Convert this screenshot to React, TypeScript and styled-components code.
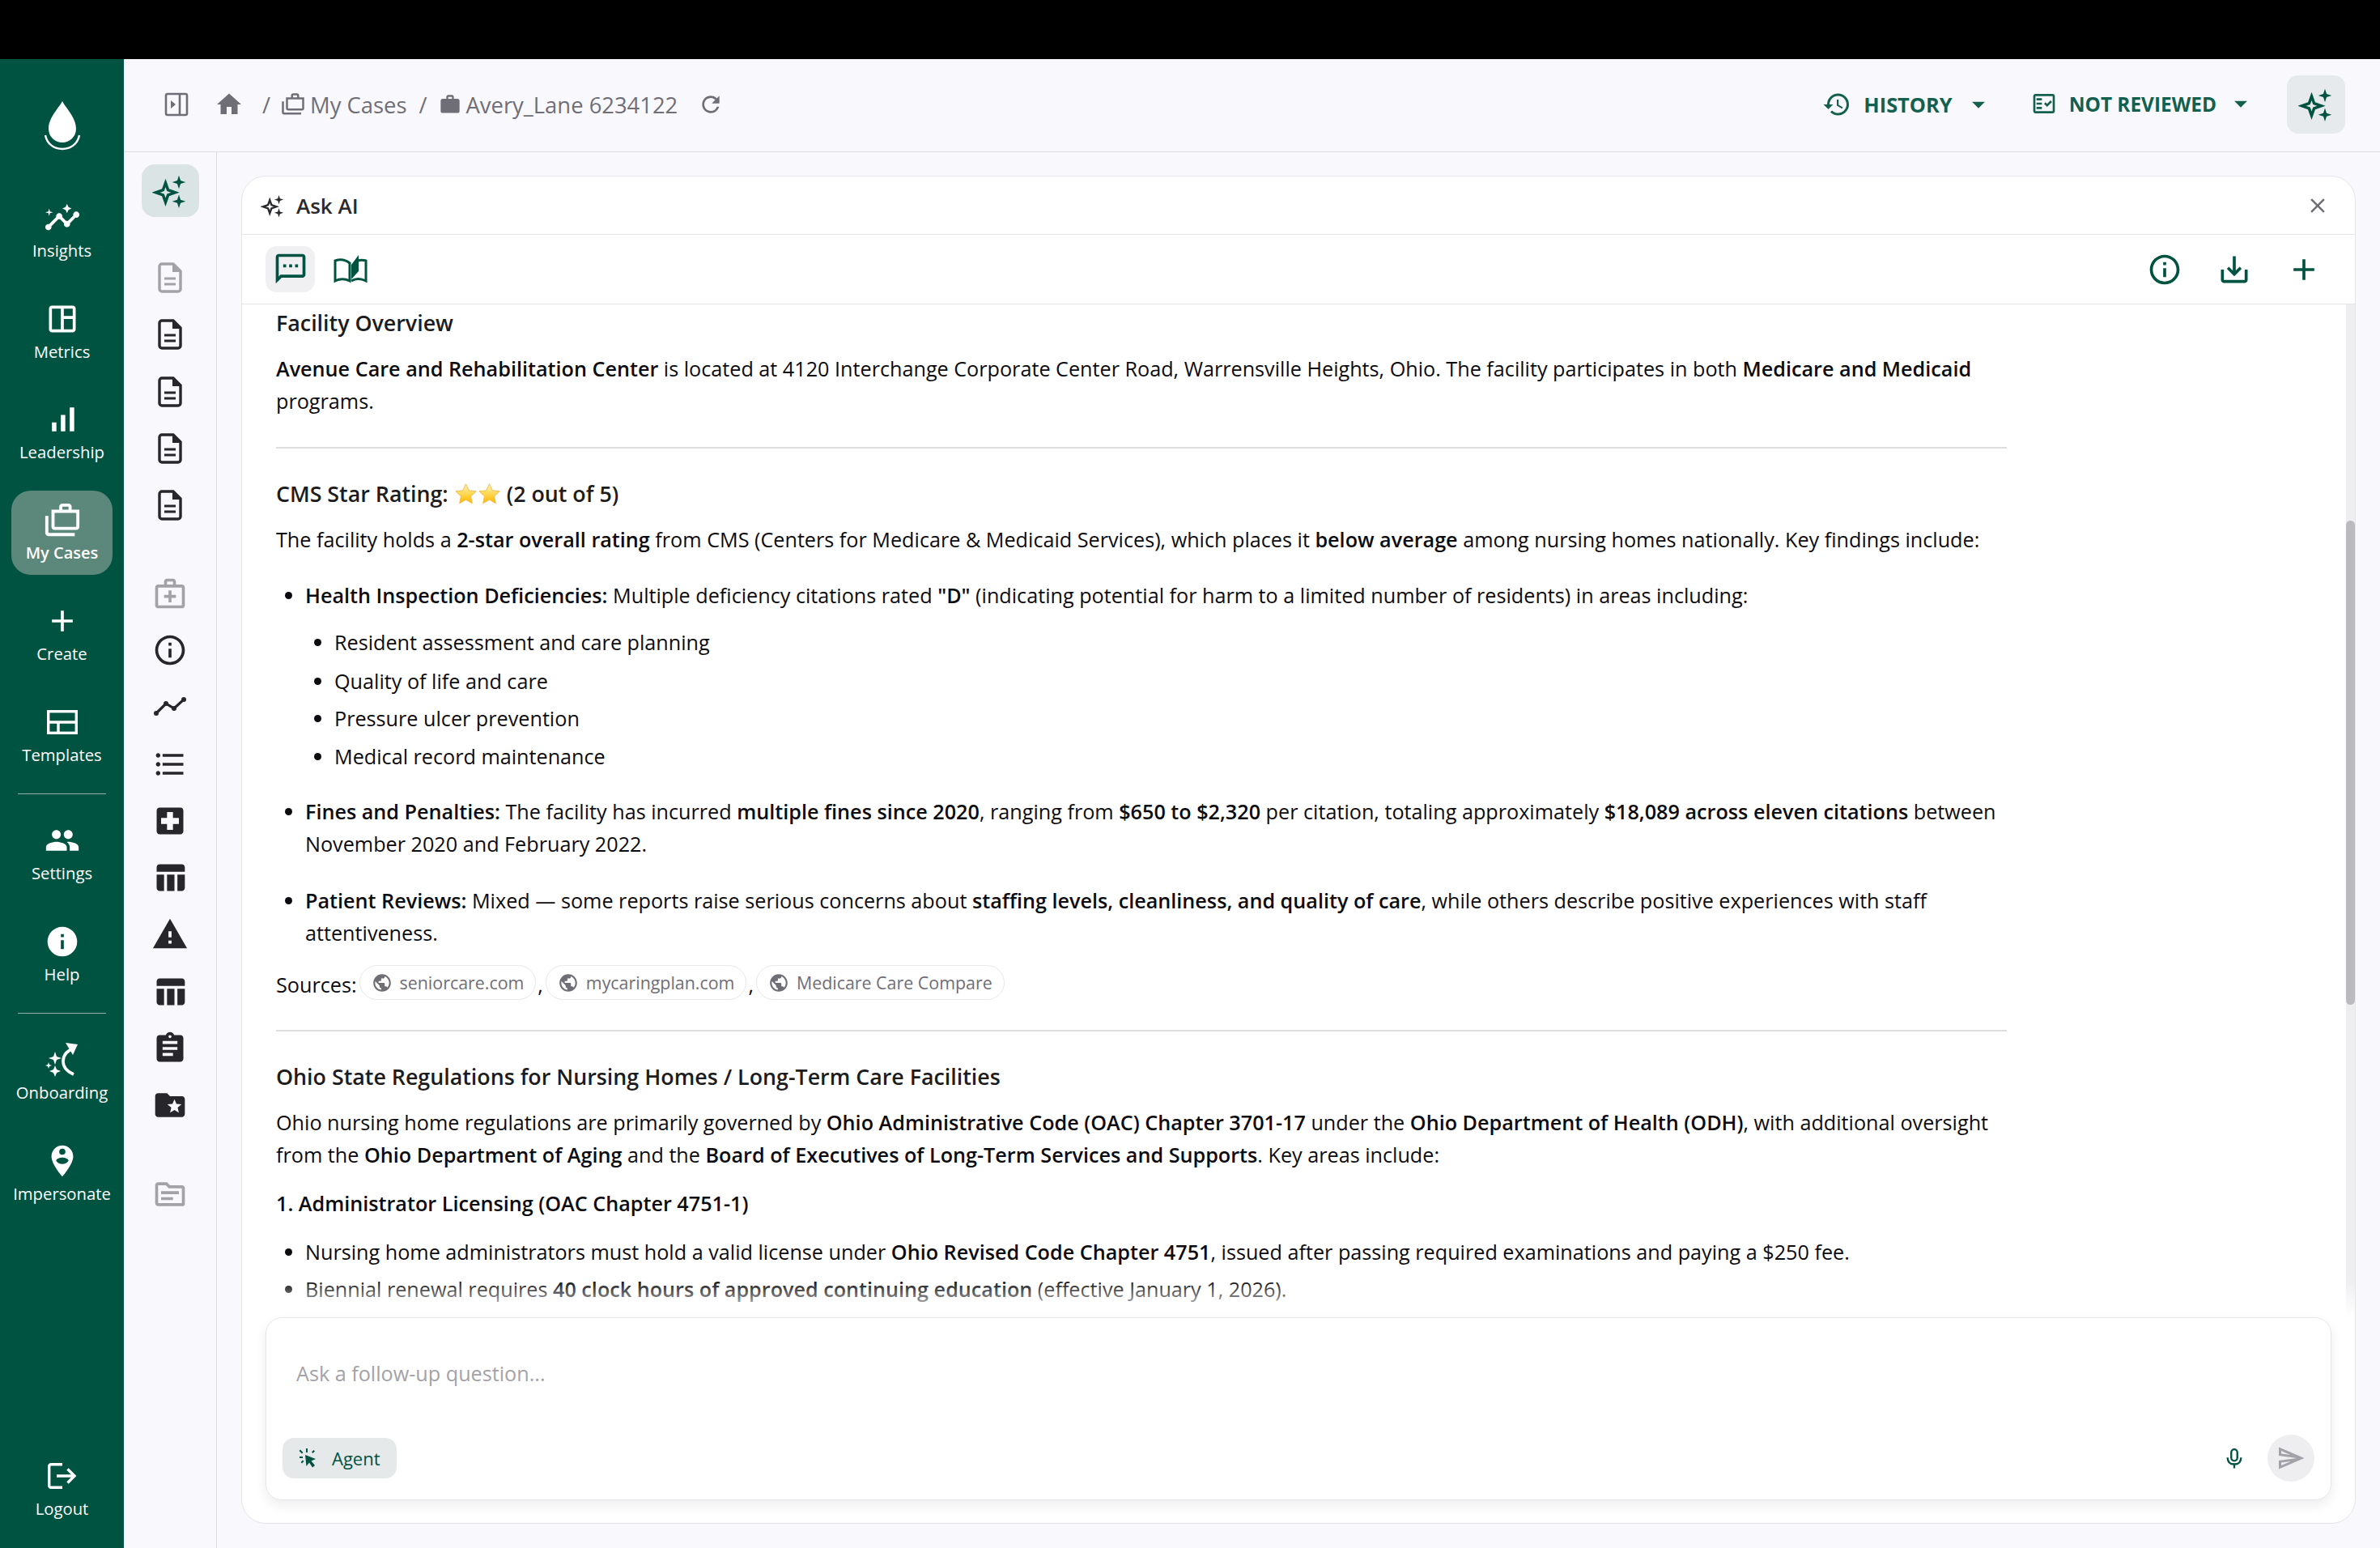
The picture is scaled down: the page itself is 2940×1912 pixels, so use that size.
import React from "react";
import styled, { createGlobalStyle } from "styled-components";
import {
  MdOutlineInsights,
  MdOutlineSpaceDashboard,
  MdSignalCellularAlt,
  MdOutlineCases,
  MdAdd,
  MdPeople,
  MdInfo,
  MdPersonPinCircle,
  MdHome,
  MdWork,
  MdRefresh,
  MdHistory,
  MdOutlineFactCheck,
  MdArrowDropDown,
  MdClose,
  MdOutlineSms,
  MdInfoOutline,
  MdSaveAlt,
  MdOutlineMedicalServices,
  MdFormatListBulleted,
  MdLocalHospital,
  MdTableChart,
  MdWarning,
  MdAssignment,
  MdFolderSpecial,
  MdOutlineTopic,
  MdPublic,
  MdOutlineSend,
} from "react-icons/md";

const GREEN = "#005241";
const LINE = "#dddde2";

const GlobalStyle = createGlobalStyle`
  html, body { margin: 0; padding: 0; background: #f9f9fd; }
  body { font-family: "Open Sans", "Liberation Sans", sans-serif; color: #0c0c10; }
  * { box-sizing: border-box; }
`;

const Page = styled.div`
  width: 2940px;
  height: 1912px;
  display: flex;
  flex-direction: column;
  overflow: hidden;
`;

const BlackBar = styled.div`
  height: 73px;
  flex: none;
  background: #000;
`;

const Body = styled.div`
  flex: 1;
  display: flex;
  min-height: 0;
`;

const Sidebar = styled.nav`
  width: 153px;
  flex: none;
  background: ${GREEN};
  display: flex;
  flex-direction: column;
  align-items: center;
  gap: 20.6px;
  padding-bottom: 22px;
`;

const LogoBox = styled.div`
  height: 139px;
  width: 100%;
  display: flex;
  align-items: center;
  justify-content: center;
  padding-top: 26px;
`;

const NavItem = styled.div<{ $active?: boolean; $bottom?: boolean }>`
  width: 125px;
  height: 104px;
  flex: none;
  border-radius: 24px;
  display: flex;
  flex-direction: column;
  align-items: center;
  justify-content: center;
  gap: 3px;
  color: #fff;
  font-size: ${(p) => (p.$active ? 20 : 20.3)}px;
  line-height: 28px;
  background: ${(p) => (p.$active ? "#5c877b" : "transparent")};
  font-weight: ${(p) => (p.$active ? 600 : 400)};
  margin-top: ${(p) => (p.$bottom ? "auto" : "0")};
  white-space: nowrap;
`;

const NavIcon = styled.div`
  height: 46px;
  display: flex;
  align-items: center;
  justify-content: center;
  svg {
    display: block;
  }
`;

const NavDivider = styled.div`
  width: 109px;
  height: 1px;
  flex: none;
  background: rgba(255, 255, 255, 0.55);
`;

const Main = styled.div`
  flex: 1;
  display: flex;
  flex-direction: column;
  min-width: 0;
`;

const TopBar = styled.header`
  height: 115px;
  flex: none;
  display: flex;
  align-items: center;
  padding: 0 43px 2px 0;
  border-bottom: 1.5px solid ${LINE};
`;

const Crumbs = styled.div`
  display: flex;
  align-items: center;
  color: #6f6e77;
  font-size: 27.4px;
  margin-left: 50px;
  svg {
    display: block;
    flex: none;
  }
`;

const CrumbHome = styled.span`
  margin-left: 32px;
`;

const Slash = styled.span<{ $left: number; $right: number }>`
  margin: 0 ${(p) => p.$right}px 0 ${(p) => p.$left}px;
`;

const CrumbText = styled.span`
  margin-left: 6px;
`;

const Reload = styled.span`
  margin-left: 25px;
`;

const TopRight = styled.div`
  margin-left: auto;
  display: flex;
  align-items: center;
`;

const StatusButton = styled.div<{ $gap: number; $size: number; $lift?: number }>`
  display: flex;
  align-items: center;
  gap: 15px;
  color: #14604f;
  font-size: ${(p) => p.$size}px;
  font-weight: 700;
  margin-right: ${(p) => p.$gap}px;
  transform: translateY(${(p) => p.$lift ?? 0}px);
  svg {
    display: block;
    flex: none;
  }
`;

const Caret = styled.span<{ $left: number }>`
  margin-left: ${(p) => p.$left}px;
`;

const AiButton = styled.div`
  width: 72px;
  height: 72px;
  border-radius: 14px;
  background: #e7eaec;
  color: ${GREEN};
  display: flex;
  align-items: center;
  justify-content: center;
`;

const Work = styled.div`
  flex: 1;
  display: flex;
  min-height: 0;
`;

const Rail = styled.aside`
  width: 115px;
  flex: none;
  border-right: 1.5px solid ${LINE};
  display: flex;
  flex-direction: column;
  align-items: center;
  padding: 15px 0 0 0;
`;

const RailAi = styled(AiButton)`
  width: 71px;
  height: 65px;
  background: #dbe4e4;
  border-radius: 16px;
  margin-bottom: 40px;
`;

const RailIcon = styled.div<{ $dim?: boolean; $space?: number }>`
  height: 70.3px;
  flex: none;
  display: flex;
  align-items: center;
  justify-content: center;
  color: ${(p) => (p.$dim ? "#a3a2a8" : "#27262b")};
  margin-top: ${(p) => p.$space ?? 0}px;
`;

const PanelWrap = styled.div`
  flex: 1;
  min-width: 0;
  padding: 29px 30px 30px 30px;
  display: flex;
`;

const Panel = styled.section`
  flex: 1;
  min-width: 0;
  background: #fff;
  border: 1.5px solid #e4e4e9;
  border-radius: 30px;
  display: flex;
  flex-direction: column;
  overflow: hidden;
  position: relative;
`;

const PanelHead = styled.div`
  height: 72px;
  flex: none;
  display: flex;
  align-items: center;
  padding: 0 31px 0 23px;
  gap: 14px;
  border-bottom: 1.5px solid #e4e4e9;
  font-size: 26px;
  font-weight: 600;
  color: #2a2a2e;
`;

const CloseBtn = styled.div`
  margin-left: auto;
  color: #6f6e77;
  display: flex;
`;

const ToolRow = styled.div`
  height: 86px;
  flex: none;
  display: flex;
  align-items: center;
  padding: 0 41px 0 29px;
  border-bottom: 1.5px solid #e4e4e9;
  color: ${GREEN};
`;

const ToolBtn = styled.div<{ $on?: boolean; $w?: number; $left?: number }>`
  width: ${(p) => p.$w ?? 61}px;
  height: 57px;
  padding-bottom: 2px;
  border-radius: 14px;
  margin-left: ${(p) => p.$left ?? 0}px;
  background: ${(p) => (p.$on ? "#f0f0f3" : "transparent")};
  display: flex;
  align-items: center;
  justify-content: center;
`;

const ToolRight = styled.div`
  margin-left: auto;
  display: flex;
  align-items: center;
  gap: 42px;
`;

const Scroll = styled.div`
  flex: 1;
  min-height: 0;
  overflow: hidden;
  position: relative;
  padding: 0 0 0 42px;
  font-size: 25.2px;
  line-height: 40px;
  color: #0c0c10;
  b {
    font-weight: 600;
  }
`;

const Article = styled.article`
  width: 2138px;
  padding-top: 3px;
`;

const Heading = styled.h3`
  font-size: 26.8px;
  line-height: 40px;
  font-weight: 600;
  margin: 0 0 16px;
  color: #1c1c20;
`;

const Para = styled.p<{ $after?: number }>`
  margin: 0 0 ${(p) => p.$after ?? 16}px;
`;

const Rule = styled.hr<{ $top?: number }>`
  border: 0;
  height: 2px;
  background: #dedee0;
  margin: ${(p) => p.$top ?? 37}px 0 36px;
`;

const List = styled.ul<{ $nested?: boolean; $after?: number }>`
  margin: ${(p) => (p.$nested ? "18px 0 0" : "0")};
  margin-bottom: ${(p) => p.$after ?? 0}px;
  padding: 0 0 0 36px;
  list-style: disc;
`;

const Item = styled.li<{ $after?: number }>`
  margin-bottom: ${(p) => p.$after ?? 0}px;
`;

const Stars = styled.span`
  display: inline-flex;
  vertical-align: -4px;
  margin: 0;
`;

const Sources = styled.div`
  display: flex;
  align-items: center;
  margin-top: 24px;
`;

const Chip = styled.span`
  height: 43px;
  padding: 0 14px;
  margin: -5px 0 0 3px;
  border: 1.5px solid #e8e8ec;
  border-radius: 22px;
  display: inline-flex;
  align-items: center;
  gap: 9px;
  color: #6f6e77;
  font-size: 21.4px;
  svg {
    display: block;
  }
`;

const Comma = styled.span`
  margin-left: 2px;
`;

const ScrollTrack = styled.div`
  position: absolute;
  right: 0;
  top: 0;
  bottom: 0;
  width: 11px;
  background: #eeeef1;
`;

const ScrollThumb = styled.div`
  position: absolute;
  left: 0;
  top: 267px;
  width: 100%;
  height: 598px;
  border-radius: 6px;
  background: #bbbbbf;
`;

const Fade = styled.div`
  position: absolute;
  left: 0;
  right: 0;
  bottom: 0;
  height: 46px;
  background: linear-gradient(rgba(255, 255, 255, 0), #fff);
`;

const InputBox = styled.div`
  flex: none;
  height: 226px;
  margin: 0 29px 28px 29px;
  border: 1.5px solid #e6e6ea;
  border-radius: 20px;
  background: #fff;
  box-shadow: 0 6px 14px rgba(30, 30, 50, 0.08);
  display: flex;
  flex-direction: column;
  padding: 0 20px 22px 20px;
  position: relative;
  z-index: 1;
`;

const Placeholder = styled.div`
  flex: 1;
  padding: 48px 0 0 17px;
  font-size: 25.2px;
  line-height: 40px;
  color: #a3a2a8;
`;

const InputFoot = styled.div`
  display: flex;
  align-items: center;
  color: ${GREEN};
`;

const AgentPill = styled.div`
  width: 141px;
  height: 50px;
  border-radius: 14px;
  background: #e6e9ea;
  color: ${GREEN};
  font-size: 22px;
  display: flex;
  align-items: center;
  padding-left: 18px;
  gap: 17px;
`;

const Mic = styled.div`
  margin-left: auto;
  margin-right: 31px;
  display: flex;
`;

const SendBtn = styled.div`
  width: 58px;
  height: 58px;
  border-radius: 50%;
  background: #eeedf0;
  color: #a3a2a8;
  display: flex;
  align-items: center;
  justify-content: center;
`;

const Sparkles = ({ size }: { size: number }) => (
  <svg width={size} height={size} viewBox="0 0 24 24" fill="currentColor">
    <path
      d="M9 6.5 10.7 11.3 15.5 13 10.7 14.7 9 19.5 7.3 14.7 2.5 13 7.3 11.3Z"
      fill="none"
      stroke="currentColor"
      strokeWidth="1.9"
    />
    <path d="M18 1.5 19.1 4.9 22.5 6 19.1 7.1 18 10.5 16.9 7.1 13.5 6 16.9 4.9Z" />
    <path d="M18 14.5 19.1 17.9 22.5 19 19.1 20.1 18 23.5 16.9 20.1 13.5 19 16.9 17.9Z" />
  </svg>
);

const Logo = () => (
  <svg width="46" height="64" viewBox="0 0 46 64" fill="#fff">
    <path d="M23 1C27 9 40 21 40 35 40 45 32 52 23 52 14 52 6 45 6 35 6 21 19 9 23 1Z" />
    <path
      d="M2 43C4 54 13 60 23 60 33 60 42 54 44 43"
      fill="none"
      stroke="#fff"
      strokeWidth="2.4"
    />
  </svg>
);

const TemplatesIcon = () => (
  <svg width="38" height="30" viewBox="0 0 38 30" fill="none" stroke="#fff" strokeWidth="3.4">
    <rect x="1.7" y="1.7" width="34.6" height="26.6" />
    <path d="M1.7 15H36.3M14 15V28" />
  </svg>
);

const OnboardingIcon = () => (
  <svg width="44" height="44" viewBox="0 0 44 44" fill="#fff">
    <path d="M13 12 15 18 21 20 15 22 13 28 11 22 5 20 11 18Z" />
    <path d="M13 29 15 34 20 36 15 38 13 43 11 38 6 36 11 34Z" />
    <path d="M5 25 6 28 9 29 6 30 5 33 4 30 1 29 4 28Z" />
    <path
      d="M36 8C27 11 23 17 23 24 23 31 27 36 36 40"
      fill="none"
      stroke="#fff"
      strokeWidth="3.6"
    />
    <path d="M26 1 41 3 35 16Z" />
  </svg>
);

const LogoutIcon = () => (
  <svg width="36" height="32" viewBox="0 0 36 32" fill="none" stroke="#fff" strokeWidth="3.4">
    <path d="M18 1.7H4A2.3 2.3 0 0 0 1.7 4V28A2.3 2.3 0 0 0 4 30.3H18" />
    <path d="M11 16H33M24.5 7.5 33 16 24.5 24.5" />
  </svg>
);

const PanelToggle = () => (
  <svg width="30" height="30" viewBox="0 0 30 30" fill="none" stroke="#6f6e77" strokeWidth="2.6">
    <rect x="2" y="2" width="26" height="26" rx="2" />
    <path d="M19 2V28" />
    <path d="M8 10 14 15 8 20Z" fill="#6f6e77" stroke="none" />
  </svg>
);

const BookIcon = () => (
  <svg width="42" height="36" viewBox="0 0 42 36" fill="none" stroke={GREEN} strokeWidth="3">
    <path d="M2 33V8C8 6 15 7 20 11V33C14 30 8 30 2 33Z" />
    <path d="M30 8C33 7 37 7 40 8V33C34 30 27 30 22 33" />
    <path d="M22 31V13L31 1V21Z" fill={GREEN} stroke="none" />
  </svg>
);

const DocIcon = () => (
  <svg width="30" height="38" viewBox="0 0 30 38" fill="none" stroke="currentColor" strokeWidth="3.4">
    <path d="M19 2H5A3 3 0 0 0 2 5V33A3 3 0 0 0 5 36H25A3 3 0 0 0 28 33V11Z" />
    <path d="M18 1 29 12H18Z" fill="currentColor" stroke="none" />
    <path d="M8 20H22M8 27H22" strokeWidth="3" />
  </svg>
);

const DotChart = () => (
  <svg width="42" height="26" viewBox="0 0 42 26" fill="currentColor" stroke="currentColor">
    <path d="M4 21 16 9 26 15 38 4" fill="none" strokeWidth="3.2" />
    <circle cx="4" cy="21" r="3" stroke="none" />
    <circle cx="16" cy="9" r="3" stroke="none" />
    <circle cx="26" cy="15" r="3" stroke="none" />
    <circle cx="38" cy="4" r="3" stroke="none" />
  </svg>
);

const AgentIcon = () => (
  <svg width="26" height="26" viewBox="0 0 26 26" fill={GREEN}>
    <path d="M10 9 23 14 17.5 16.5 22 22 19 24.5 15 18.5 11.5 23Z" />
    <path d="M11 1h2v5h-2zM3 11h4v2H3zM2.5 4 4 2.6 7.4 6 6 7.4ZM18 5.6 20.4 3 22 4.4 19.4 7ZM4.6 18 7 15.6 8.4 17 6 19.4Z" />
  </svg>
);

const MicIcon = () => (
  <svg width="20" height="26" viewBox="0 0 24 30" fill="none" stroke={GREEN} strokeWidth="2.8">
    <rect x="7.5" y="2" width="9" height="17" rx="4.5" />
    <path d="M2 14C2 21 6 24 12 24S22 21 22 14M12 24V30" />
  </svg>
);

const StarEmoji = () => (
  <svg width="29" height="28" viewBox="0 0 24 24">
    <defs>
      <linearGradient id="starFill" x1="0" y1="0" x2="0" y2="1">
        <stop offset="0" stopColor="#fff6c4" />
        <stop offset="0.6" stopColor="#ffd23f" />
        <stop offset="1" stopColor="#ffb300" />
      </linearGradient>
    </defs>
    <path
      d="M12 1.5 15.2 8.4 22.8 9.3 17.2 14.5 18.7 22 12 18.2 5.3 22 6.8 14.5 1.2 9.3 8.8 8.4Z"
      fill="url(#starFill)"
      stroke="#f5b942"
      strokeWidth="0.8"
    />
  </svg>
);

const navTop = [
  { label: "Insights", icon: <MdOutlineInsights size={46} /> },
  { label: "Metrics", icon: <MdOutlineSpaceDashboard size={44} /> },
  { label: "Leadership", icon: <MdSignalCellularAlt size={44} /> },
  { label: "My Cases", icon: <MdOutlineCases size={46} />, active: true },
  { label: "Create", icon: <MdAdd size={44} /> },
  { label: "Templates", icon: <TemplatesIcon /> },
];

const railIcons = [
  { icon: <DocIcon />, dim: true },
  { icon: <DocIcon /> },
  { icon: <DocIcon /> },
  { icon: <DocIcon /> },
  { icon: <DocIcon /> },
  { icon: <MdOutlineMedicalServices size={44} />, dim: true, space: 38 },
  { icon: <MdInfoOutline size={44} /> },
  { icon: <DotChart /> },
  { icon: <MdFormatListBulleted size={44} /> },
  { icon: <MdLocalHospital size={44} /> },
  { icon: <MdTableChart size={44} /> },
  { icon: <MdWarning size={46} /> },
  { icon: <MdTableChart size={44} /> },
  { icon: <MdAssignment size={44} /> },
  { icon: <MdFolderSpecial size={44} /> },
  { icon: <MdOutlineTopic size={44} />, dim: true, space: 39 },
];

const sources = ["seniorcare.com", "mycaringplan.com", "Medicare Care Compare"];

export default function App() {
  return (
    <Page>
      <GlobalStyle />
      <BlackBar />
      <Body>
        <Sidebar>
          <LogoBox>
            <Logo />
          </LogoBox>
          {navTop.map((n) => (
            <NavItem key={n.label} $active={n.active}>
              <NavIcon>{n.icon}</NavIcon>
              {n.label}
            </NavItem>
          ))}
          <NavDivider />
          <NavItem>
            <NavIcon>
              <MdPeople size={44} />
            </NavIcon>
            Settings
          </NavItem>
          <NavItem>
            <NavIcon>
              <MdInfo size={44} />
            </NavIcon>
            Help
          </NavItem>
          <NavDivider />
          <NavItem>
            <NavIcon>
              <OnboardingIcon />
            </NavIcon>
            Onboarding
          </NavItem>
          <NavItem>
            <NavIcon>
              <MdPersonPinCircle size={46} />
            </NavIcon>
            Impersonate
          </NavItem>
          <NavItem $bottom>
            <NavIcon>
              <LogoutIcon />
            </NavIcon>
            Logout
          </NavItem>
        </Sidebar>
        <Main>
          <TopBar>
            <Crumbs>
              <PanelToggle />
              <CrumbHome>
                <MdHome size={36} />
              </CrumbHome>
              <Slash $left={23} $right={13}>
                /
              </Slash>
              <MdOutlineCases size={30} />
              <CrumbText>My Cases</CrumbText>
              <Slash $left={15} $right={14}>
                /
              </Slash>
              <MdWork size={28} />
              <CrumbText>Avery_Lane 6234122</CrumbText>
              <Reload>
                <MdRefresh size={32} />
              </Reload>
            </Crumbs>
            <TopRight>
              <StatusButton $gap={46} $size={25.4}>
                <MdHistory size={36} />
                HISTORY
                <Caret $left={-2}>
                  <MdArrowDropDown size={38} />
                </Caret>
              </StatusButton>
              <StatusButton $gap={38} $size={24.4} $lift={-1}>
                <MdOutlineFactCheck size={32} />
                NOT REVIEWED
                <Caret $left={-4}>
                  <MdArrowDropDown size={38} />
                </Caret>
              </StatusButton>
              <AiButton>
                <Sparkles size={44} />
              </AiButton>
            </TopRight>
          </TopBar>
          <Work>
            <Rail>
              <RailAi>
                <Sparkles size={44} />
              </RailAi>
              {railIcons.map((r, i) => (
                <RailIcon key={i} $dim={r.dim} $space={r.space}>
                  {r.icon}
                </RailIcon>
              ))}
            </Rail>
            <PanelWrap>
              <Panel>
                <PanelHead>
                  <Sparkles size={30} />
                  Ask AI
                  <CloseBtn>
                    <MdClose size={30} />
                  </CloseBtn>
                </PanelHead>
                <ToolRow>
                  <ToolBtn $on>
                    <MdOutlineSms size={44} />
                  </ToolBtn>
                  <ToolBtn $w={52} $left={18}>
                    <BookIcon />
                  </ToolBtn>
                  <ToolRight>
                    <MdInfoOutline size={44} />
                    <MdSaveAlt size={44} />
                    <MdAdd size={44} />
                  </ToolRight>
                </ToolRow>
                <Scroll>
                  <Article>
                    <Heading>Facility Overview</Heading>
                    <Para>
                      <b>Avenue Care and Rehabilitation Center</b> is located at 4120 Interchange
                      Corporate Center Road, Warrensville Heights, Ohio. The facility participates
                      in both <b>Medicare and Medicaid</b> programs.
                    </Para>
                    <Rule />
                    <Heading>
                      CMS Star Rating:{" "}
                      <Stars>
                        <StarEmoji />
                        <StarEmoji />
                      </Stars>{" "}
                      (2 out of 5)
                    </Heading>
                    <Para $after={29}>
                      The facility holds a <b>2-star overall rating</b> from CMS (Centers for
                      Medicare &amp; Medicaid Services), which places it <b>below average</b> among
                      nursing homes nationally. Key findings include:
                    </Para>
                    <List>
                      <Item $after={28}>
                        <b>Health Inspection Deficiencies:</b> Multiple deficiency citations rated{" "}
                        <b>"D"</b> (indicating potential for harm to a limited number of residents)
                        in areas including:
                        <List $nested>
                          <Item $after={8}>Resident assessment and care planning</Item>
                          <Item $after={6}>Quality of life and care</Item>
                          <Item $after={7}>Pressure ulcer prevention</Item>
                          <Item>Medical record maintenance</Item>
                        </List>
                      </Item>
                      <Item $after={30}>
                        <b>Fines and Penalties:</b> The facility has incurred{" "}
                        <b>multiple fines since 2020</b>, ranging from <b>$650 to $2,320</b> per
                        citation, totaling approximately <b>$18,089 across eleven citations</b>{" "}
                        between November 2020 and February 2022.
                      </Item>
                      <Item>
                        <b>Patient Reviews:</b> Mixed — some reports raise serious concerns about{" "}
                        <b>staffing levels, cleanliness, and quality of care</b>, while others
                        describe positive experiences with staff attentiveness.
                      </Item>
                    </List>
                    <Sources>
                      Sources:
                      {sources.map((s, i) => (
                        <React.Fragment key={s}>
                          <Chip>
                            <MdPublic size={26} />
                            {s}
                          </Chip>
                          {i < sources.length - 1 && <Comma>,</Comma>}
                        </React.Fragment>
                      ))}
                    </Sources>
                    <Rule $top={36} />
                    <Heading>Ohio State Regulations for Nursing Homes / Long-Term Care Facilities</Heading>
                    <Para $after={20}>
                      Ohio nursing home regulations are primarily governed by{" "}
                      <b>Ohio Administrative Code (OAC) Chapter 3701-17</b> under the{" "}
                      <b>Ohio Department of Health (ODH)</b>, with additional oversight from the{" "}
                      <b>Ohio Department of Aging</b> and the{" "}
                      <b>Board of Executives of Long-Term Services and Supports</b>. Key areas
                      include:
                    </Para>
                    <Para $after={20}>
                      <b>1. Administrator Licensing (OAC Chapter 4751-1)</b>
                    </Para>
                    <List>
                      <Item $after={6}>
                        Nursing home administrators must hold a valid license under{" "}
                        <b>Ohio Revised Code Chapter 4751</b>, issued after passing required
                        examinations and paying a $250 fee.
                      </Item>
                      <Item>
                        Biennial renewal requires <b>40 clock hours of approved continuing education</b>{" "}
                        (effective January 1, 2026).
                      </Item>
                    </List>
                  </Article>
                  <ScrollTrack>
                    <ScrollThumb />
                  </ScrollTrack>
                  <Fade />
                </Scroll>
                <InputBox>
                  <Placeholder>Ask a follow-up question...</Placeholder>
                  <InputFoot>
                    <AgentPill>
                      <AgentIcon />
                      Agent
                    </AgentPill>
                    <Mic>
                      <MicIcon />
                    </Mic>
                    <SendBtn>
                      <MdOutlineSend size={36} />
                    </SendBtn>
                  </InputFoot>
                </InputBox>
              </Panel>
            </PanelWrap>
          </Work>
        </Main>
      </Body>
    </Page>
  );
}
